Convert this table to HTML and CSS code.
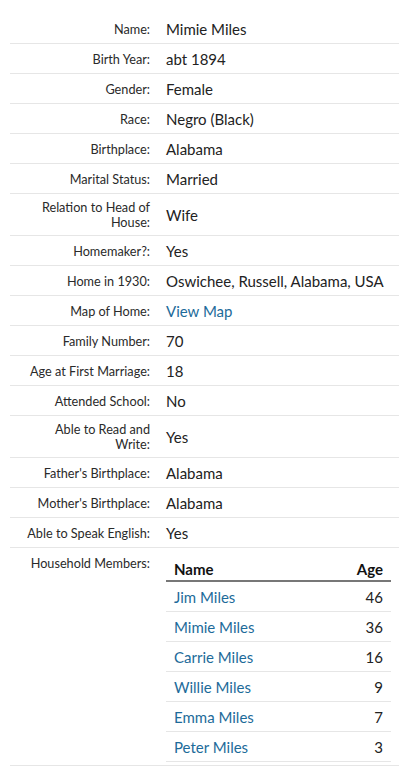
FILE: index.html
```html
<!DOCTYPE html>
<html>
<head>
<meta charset="utf-8">
<link rel="stylesheet" href="styles.css">
</head>
<body>
<div class="facts">
  <div class="row"><div class="label">Name:</div><div class="value">Mimie Miles</div></div>
  <div class="row"><div class="label">Birth Year:</div><div class="value">abt 1894</div></div>
  <div class="row"><div class="label">Gender:</div><div class="value">Female</div></div>
  <div class="row"><div class="label">Race:</div><div class="value">Negro (Black)</div></div>
  <div class="row"><div class="label">Birthplace:</div><div class="value">Alabama</div></div>
  <div class="row"><div class="label">Marital Status:</div><div class="value">Married</div></div>
  <div class="row"><div class="label">Relation to Head of House:</div><div class="value">Wife</div></div>
  <div class="row"><div class="label">Homemaker?:</div><div class="value">Yes</div></div>
  <div class="row"><div class="label">Home in 1930:</div><div class="value">Oswichee, Russell, Alabama, USA</div></div>
  <div class="row"><div class="label">Map of Home:</div><div class="value"><a class="link" href="#">View Map</a></div></div>
  <div class="row"><div class="label">Family Number:</div><div class="value">70</div></div>
  <div class="row"><div class="label">Age at First Marriage:</div><div class="value">18</div></div>
  <div class="row"><div class="label">Attended School:</div><div class="value">No</div></div>
  <div class="row"><div class="label">Able to Read and Write:</div><div class="value">Yes</div></div>
  <div class="row"><div class="label">Father's Birthplace:</div><div class="value">Alabama</div></div>
  <div class="row"><div class="label">Mother's Birthplace:</div><div class="value">Alabama</div></div>
  <div class="row"><div class="label">Able to Speak English:</div><div class="value">Yes</div></div>
  <div class="row row-top">
    <div class="label">Household Members:</div>
    <div class="value value-table">
      <table class="members">
        <thead>
          <tr><th class="col-name">Name</th><th class="col-age">Age</th></tr>
        </thead>
        <tbody>
          <tr><td><a class="link" href="#">Jim Miles</a></td><td class="col-age">46</td></tr>
          <tr><td><a class="link" href="#">Mimie Miles</a></td><td class="col-age">36</td></tr>
          <tr><td><a class="link" href="#">Carrie Miles</a></td><td class="col-age">16</td></tr>
          <tr><td><a class="link" href="#">Willie Miles</a></td><td class="col-age">9</td></tr>
          <tr><td><a class="link" href="#">Emma Miles</a></td><td class="col-age">7</td></tr>
          <tr><td><a class="link" href="#">Peter Miles</a></td><td class="col-age">3</td></tr>
        </tbody>
      </table>
    </div>
  </div>
</div>
</body>
</html>
```

FILE: styles.css
```css
html, body {
  margin: 0;
  padding: 0;
  background: #fff;
}
body {
  font-family: Lato, "Open Sans", sans-serif;
  color: #222;
}
.facts {
  padding: 14px 4px 0 10px;
}
.row {
  display: grid;
  grid-template-columns: 140px 1fr;
  column-gap: 16px;
  align-items: center;
  padding: 6px 0 5px;
  border-bottom: 1px solid #e6e6e6;
}
.row-top {
  align-items: start;
  padding-bottom: 3px;
}
.label {
  text-align: right;
  font-size: 12.7px;
  line-height: 15px;
  color: #2a2a2a;
  padding-left: 10px;
}
.row-top .label {
  padding-top: 2px;
}
.value {
  font-size: 15px;
  line-height: 18px;
  color: #222;
}
.link {
  color: #1d6b9a;
  text-decoration: none;
}
.members {
  border-collapse: collapse;
  width: calc(100% - 8px);
}
.members th {
  font-weight: bold;
  color: #111;
  text-align: left;
  padding: 6px 8px 2px;
  border-bottom: 2px solid #777;
}
.members td {
  padding: 6px 8px 5px;
  border-bottom: 1px solid #e6e6e6;
}
.members .col-age {
  text-align: right;
}
```
